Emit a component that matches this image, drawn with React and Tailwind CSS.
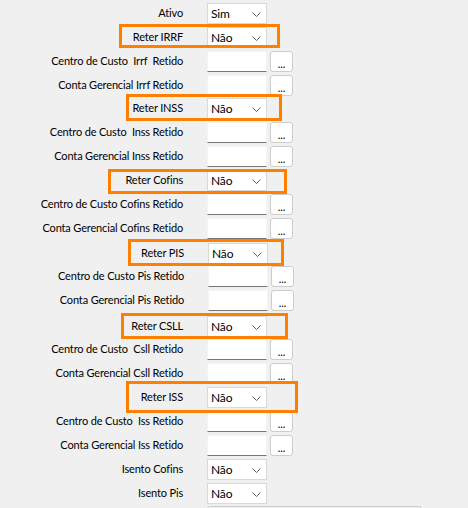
import React from 'react'

const rows = [
  { label: 'Ativo', kind: 'select', value: 'Sim', h: 'h-[24px]' },
  { label: 'Reter IRRF', kind: 'select', value: 'Não', h: 'h-[24px]' },
  { label: 'Centro de Custo  Irrf  Retido', kind: 'lookup', h: 'h-[24px]' },
  { label: 'Conta Gerencial Irrf Retido', kind: 'lookup', h: 'h-[23px]' },
  { label: 'Reter INSS', kind: 'select', value: 'Não', h: 'h-[24px]' },
  { label: 'Centro de Custo  Inss Retido', kind: 'lookup', h: 'h-[24px]' },
  { label: 'Conta Gerencial Inss Retido', kind: 'lookup', h: 'h-[24px]' },
  { label: 'Reter Cofins', kind: 'select', value: 'Não', h: 'h-[24px]' },
  { label: 'Centro de Custo Cofins Retido', kind: 'lookup', h: 'h-[24px]' },
  { label: 'Conta Gerencial Cofins Retido', kind: 'lookup', h: 'h-[25px]' },
  { label: 'Reter PIS', kind: 'select', value: 'Não', h: 'h-[23px]', shift: true },
  { label: 'Centro de Custo Pis Retido', kind: 'lookup', h: 'h-[24px]', shift: true },
  { label: 'Conta Gerencial Pis Retido', kind: 'lookup', h: 'h-[26px]', shift: true },
  { label: 'Reter CSLL', kind: 'select', value: 'Não', h: 'h-[23px]' },
  { label: 'Centro de Custo  Csll Retido', kind: 'lookup', h: 'h-[24px]' },
  { label: 'Conta Gerencial Csll Retido', kind: 'lookup', h: 'h-[24px]' },
  { label: 'Reter ISS', kind: 'select', value: 'Não', h: 'h-[24px]' },
  { label: 'Centro de Custo  Iss Retido', kind: 'lookup', h: 'h-[24px]' },
  { label: 'Conta Gerencial Iss Retido', kind: 'lookup', h: 'h-[24px]' },
  { label: 'Isento Cofins', kind: 'select', value: 'Não', h: 'h-[24px]' },
  { label: 'Isento Pis', kind: 'select', value: 'Não', h: 'h-[23px]' },
]

// caixas de destaque desenhadas por cima do formulario
const highlights = [
  'left-[119px] top-[24px] w-[161px] h-[24px]',
  'left-[126px] top-[94px] w-[156px] h-[27px]',
  'left-[108px] top-[169px] w-[179px] h-[25px]',
  'left-[128px] top-[239px] w-[156px] h-[27px]',
  'left-[121px] top-[313px] w-[167px] h-[26px]',
  'left-[126px] top-[381px] w-[172px] h-[32px]',
]

function Chevron() {
  return (
    <svg width="9" height="5" viewBox="0 0 9 5" className="absolute right-[5px] top-[8px]">
      <path d="M0.5 0.5 L4.5 4.5 L8.5 0.5" fill="none" stroke="#606060" strokeWidth="1" />
    </svg>
  )
}

function Select({ value }) {
  return (
    <div className="relative w-[60px] h-[21px] bg-white border border-[#d9d9d9] flex items-center pl-[3px] text-black text-[12px]">
      {value}
      <Chevron />
    </div>
  )
}

function Lookup() {
  return (
    <div className="flex">
      <div className="w-[60px] h-[21px] bg-white border border-[#f4f4f4] border-b-[#767676]" />
      <button className="ml-[3px] w-[23px] h-[21px] bg-white border border-[#cccccc] rounded-[3px] flex items-end justify-center pb-[2px] leading-none text-black">
        ...
      </button>
    </div>
  )
}

export default function App() {
  return (
    <div
      className="relative w-[468px] h-[508px] overflow-hidden bg-[#f0f0f0] text-[11px] tracking-[-0.15px] text-black pt-[3px]"
      style={{ fontFamily: 'Lato, "Segoe UI", sans-serif' }}
    >
      {rows.map((r, i) => (
        <div key={i} className={`flex ${r.h} ${r.shift ? 'pl-px' : ''}`}>
          <div className="w-[183px] h-[21px] flex items-center justify-end whitespace-pre">{r.label}</div>
          <div className="ml-[24px]">
            {r.kind === 'select' ? <Select value={r.value} /> : <Lookup />}
          </div>
        </div>
      ))}
      <div className="ml-[207px] w-[215px] h-[21px] bg-[#f0f0f0] border border-[#cccccc] rounded-[3px]" />

      {highlights.map((c, i) => (
        <div key={i} className={`absolute ${c} border-[3px] border-[#ff8000] pointer-events-none`} />
      ))}
    </div>
  )
}
